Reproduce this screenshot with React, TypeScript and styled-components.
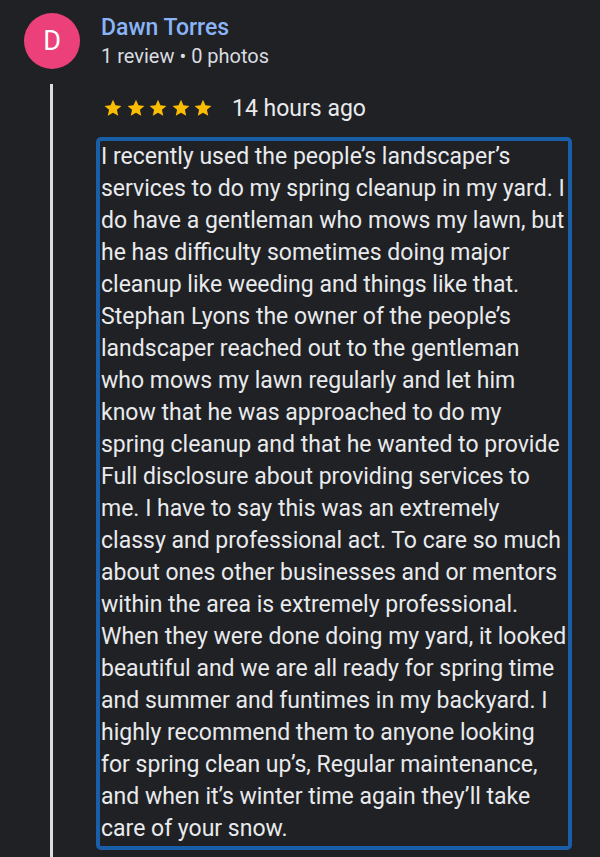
import styled, { createGlobalStyle } from 'styled-components';

const GlobalStyle = createGlobalStyle`
  html, body {
    margin: 0;
    padding: 0;
    background: #202124;
  }
  body {
    font-family: Roboto, "Noto Sans", Arial, sans-serif;
    -webkit-font-smoothing: antialiased;
  }
`;

const review = {
  author: 'Dawn Torres',
  initial: 'D',
  meta: '1 review • 0 photos',
  rating: 5,
  when: '14 hours ago',
  text:
    'I recently used the people’s landscaper’s services to do my spring cleanup in my yard. I do have a gentleman who mows my lawn, but he has difficulty sometimes doing major cleanup like weeding and things like that. Stephan Lyons the owner of the people’s landscaper reached out to the gentleman who mows my lawn regularly and let him know that he was approached to do my spring cleanup and that he wanted to provide Full disclosure about providing services to me. I have to say this was an extremely classy and professional act. To care so much about ones other businesses and or mentors within the area is extremely professional. When they were done doing my yard, it looked beautiful and we are all ready for spring time and summer and funtimes in my backyard. I highly recommend them to anyone looking for spring clean up’s, Regular maintenance, and when it’s winter time again they’ll take care of your snow.',
};

const Star = () => (
  <svg width="22" height="20" viewBox="0 0 24 24">
    <path
      d="M12 2.2l2.95 6.55 7.15.7-5.38 4.78 1.57 7.02L12 17.6l-6.29 3.65 1.57-7.02L1.9 9.45l7.15-.7z"
      fill="#fbbc04"
    />
  </svg>
);

const App = () => (
  <>
    <GlobalStyle />
    <Page>
      <Header>
        <Avatar>{review.initial}</Avatar>
        <Author>
          <Name>{review.author}</Name>
          <Meta>{review.meta}</Meta>
        </Author>
      </Header>
      <Thread>
        <Rail>
          <RailLine />
        </Rail>
        <Body>
          <RatingRow>
            <Stars>
              {Array.from({ length: review.rating }).map((_, i) => (
                <Star key={i} />
              ))}
            </Stars>
            <When>{review.when}</When>
          </RatingRow>
          <TextBox>{review.text}</TextBox>
        </Body>
      </Thread>
    </Page>
  </>
);

const Page = styled.div`
  height: 857px;
  overflow: hidden;
  padding: 13px 0 0 24px;
  box-sizing: border-box;
  display: flex;
  flex-direction: column;
`;

const Header = styled.div`
  display: flex;
  align-items: flex-start;
  gap: 21px;
`;

const Avatar = styled.div`
  width: 56px;
  height: 56px;
  border-radius: 50%;
  background: #ec407a;
  color: #ffffff;
  font-size: 27px;
  display: flex;
  align-items: center;
  justify-content: center;
  flex-shrink: 0;
`;

const Author = styled.div`
  display: flex;
  flex-direction: column;
`;

const Name = styled.div`
  font-size: 23px;
  font-weight: 500;
  line-height: 29px;
  color: #8ab4f8;
`;

const Meta = styled.div`
  font-size: 20px;
  line-height: 29px;
  color: #dadce0;
`;

const Thread = styled.div`
  display: flex;
  flex: 1;
  margin-top: 13px;
`;

const Rail = styled.div`
  width: 56px;
  display: flex;
  justify-content: center;
  flex-shrink: 0;
`;

const RailLine = styled.div`
  width: 3px;
  background: #dadce0;
  margin-left: -1px;
`;

const Body = styled.div`
  display: flex;
  flex-direction: column;
  margin-left: 16px;
`;

const RatingRow = styled.div`
  display: flex;
  align-items: center;
  height: 32px;
  margin-top: 8px;
  padding-left: 6px;
  gap: 18px;
`;

const Stars = styled.div`
  display: flex;
  gap: 0.5px;
`;

const When = styled.div`
  font-size: 23px;
  color: #e8eaed;
`;

const TextBox = styled.div`
  margin-top: 13px;
  width: 476px;
  box-sizing: border-box;
  border: 4px solid #1a5ea8;
  border-radius: 5px;
  padding: 0 0 1px 1px;
  font-size: 23px;
  line-height: 32px;
  color: #e8eaed;
`;

export default App;
